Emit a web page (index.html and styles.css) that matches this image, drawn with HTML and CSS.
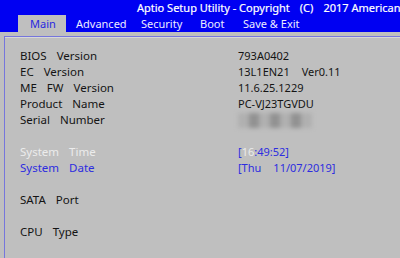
FILE: index.html
```html
<!DOCTYPE html>
<html>
<head>
<meta charset="utf-8">
<link rel="stylesheet" href="styles.css">
</head>
<body>
<div class="screen">
  <header class="top">
    <div class="title"><span>Aptio Setup Utility - Copyright</span><span>(C)</span><span>2017 American</span></div>
    <nav class="tabs">
      <span class="tab active">Main</span>
      <span class="tab w-adv">Advanced</span>
      <span class="tab w-sec">Security</span>
      <span class="tab w-boot">Boot</span>
      <span class="tab">Save &amp; Exit</span>
    </nav>
  </header>
  <div class="gap"></div>
  <main class="panel">
    <div class="row"><span class="label"><span>BIOS</span><span>Version</span></span><span class="value">793A0402</span></div>
    <div class="row"><span class="label"><span>EC</span><span>Version</span></span><span class="value"><span>13L1EN21</span><span>Ver0.11</span></span></div>
    <div class="row"><span class="label"><span>ME</span><span>FW</span><span>Version</span></span><span class="value">11.6.25.1229</span></div>
    <div class="row"><span class="label"><span>Product</span><span>Name</span></span><span class="value">PC-VJ23TGVDU</span></div>
    <div class="row"><span class="label"><span>Serial</span><span>Number</span></span><span class="value"><span class="blur"><i></i><i></i><i></i><i></i><i></i><i></i><i></i></span></span></div>
    <div class="row"></div>
    <div class="row"><span class="label white"><span>System</span><span>Time</span></span><span class="value blue">[<span class="white">16</span>:49:52]</span></div>
    <div class="row"><span class="label blue"><span>System</span><span>Date</span></span><span class="value blue"><span>[Thu</span><span>11/07/2019]</span></span></div>
    <div class="row"></div>
    <div class="row"><span class="label"><span>SATA</span><span>Port</span></span></div>
    <div class="row"></div>
    <div class="row"><span class="label"><span>CPU</span><span>Type</span></span></div>
  </main>
</div>
</body>
</html>
```
FILE: styles.css
```css
html, body {
  margin: 0;
  padding: 0;
}
body {
  width: 400px;
  height: 258px;
  overflow: hidden;
  background: #bfbfbf;
  font-family: "Noto Sans", "DejaVu Sans", sans-serif;
  font-size: 11px;
  color: #141414;
}
.screen {
  display: flex;
  flex-direction: column;
  height: 258px;
}
.top {
  background: #0000f2;
  color: #ffffff;
  height: 32px;
  display: flex;
  flex-direction: column;
}
.title {
  display: flex;
  gap: 10px;
  height: 15px;
  line-height: 15px;
  padding-left: 137px;
  white-space: nowrap;
  font-size: 11px;
  -webkit-text-stroke: 0.2px #ffffff;
}
.tabs {
  display: flex;
  height: 17px;
  padding-left: 18px;
  font-size: 11px;
}
.tab {
  line-height: 17px;
  padding-left: 10px;
  white-space: nowrap;
  color: #ececff;
  box-sizing: border-box;
}
.tab.active {
  width: 48px;
  padding-left: 12px;
  background: #bfbfbf;
  color: #2828e0;
}
.w-adv { width: 65px; }
.w-sec { width: 59px; }
.w-boot { width: 43px; }
.gap {
  height: 4px;
}
.panel {
  flex: 1;
  margin-left: 4px;
  border-top: 1px solid #7676dc;
  border-left: 1px solid #7676dc;
  box-shadow: inset 0 1px 0 #d8d8d8;
  padding-top: 11px;
  padding-left: 15px;
}
.row {
  display: flex;
  height: 16px;
  line-height: 16px;
  white-space: nowrap;
}
.label {
  display: flex;
  gap: 10px;
  width: 218px;
  font-size: 11.5px;
}
.value {
  display: flex;
  gap: 12px;
}
.white {
  color: #ececec;
}
.blue {
  color: #2d2de0;
}
.value.blue {
  gap: 0;
}
.value.blue > span + span {
  margin-left: 12px;
}
.blur {
  display: flex;
  width: 74px;
  height: 15px;
  margin-top: 1px;
  filter: blur(2px);
}
.blur i {
  flex: 1;
  background: #b0b0b0;
}
.blur i:nth-child(even) {
  background: #929292;
}
```
